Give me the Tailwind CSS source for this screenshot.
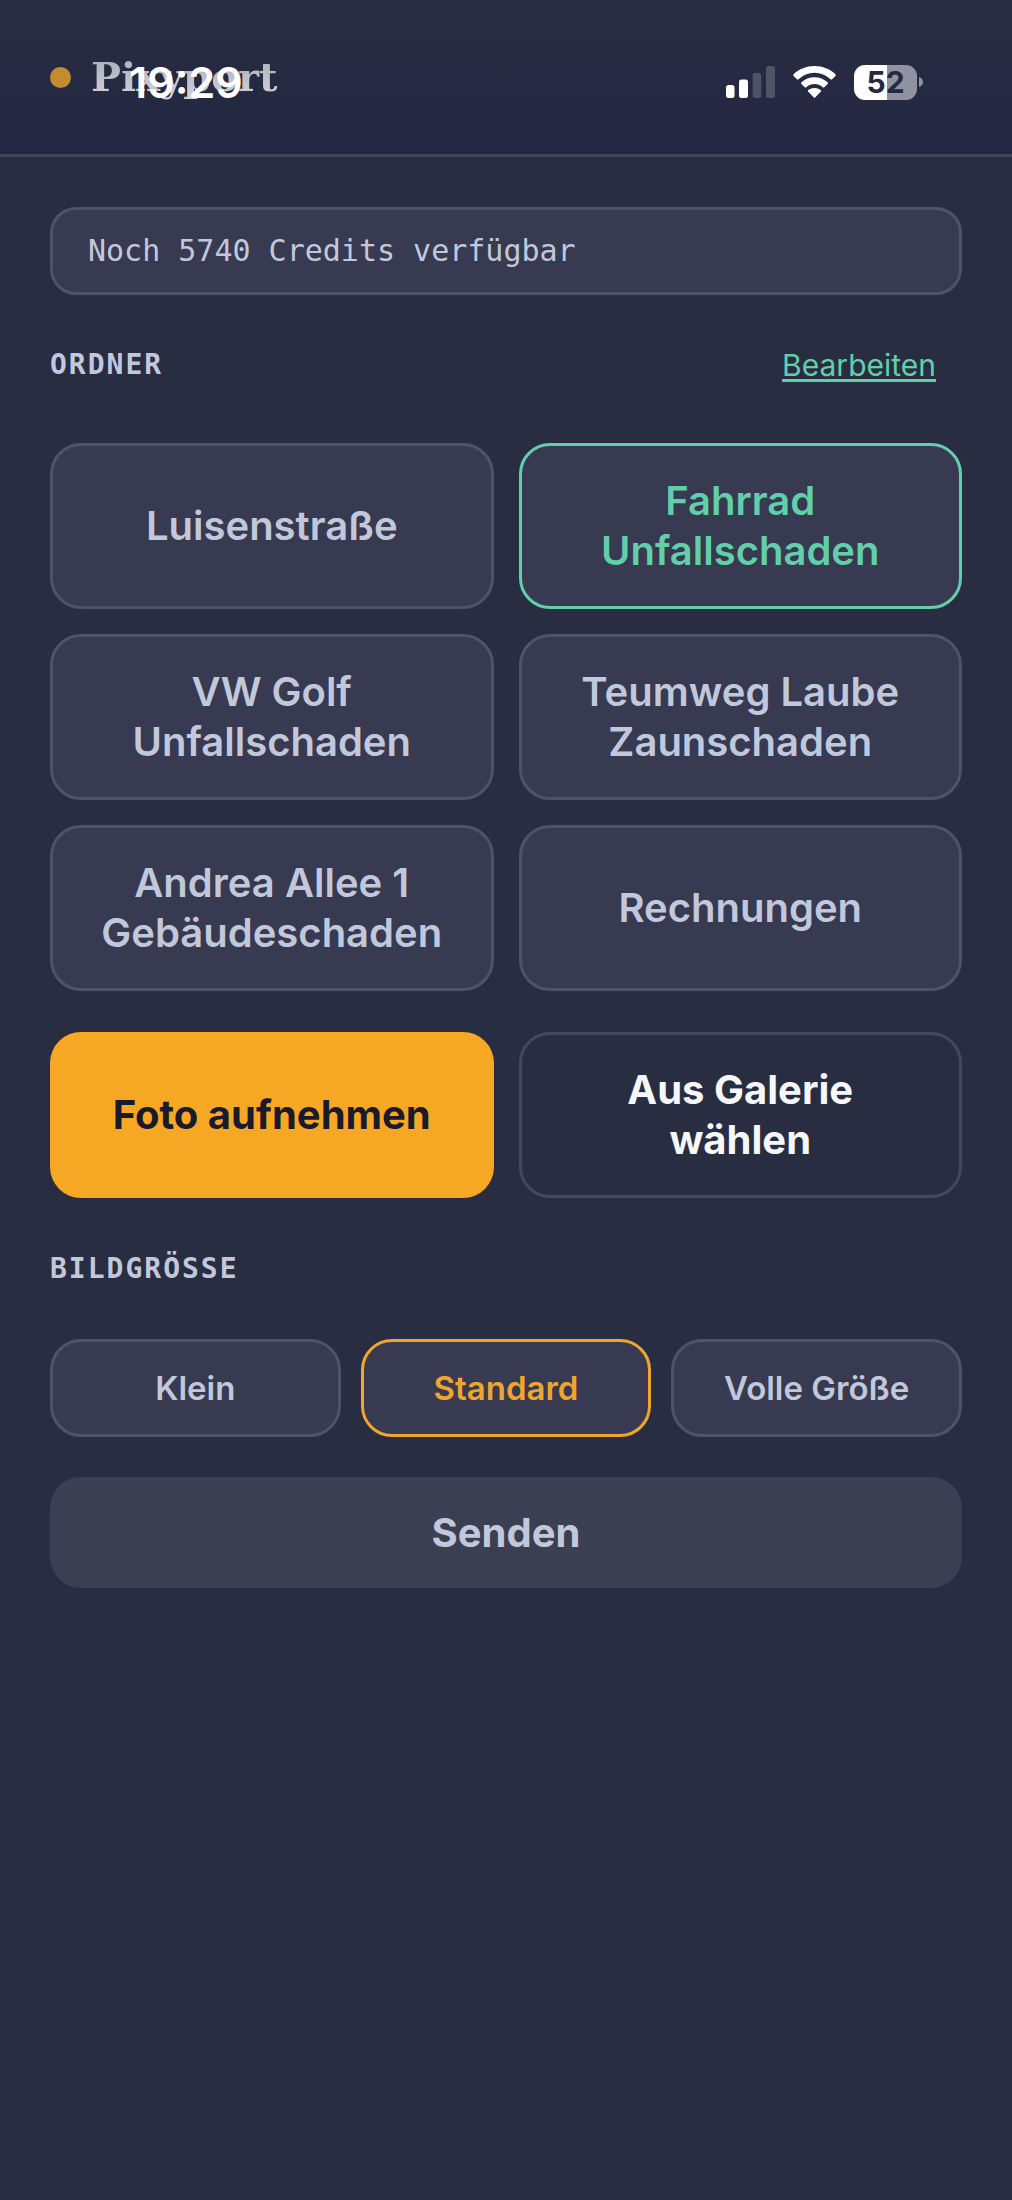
<!DOCTYPE html>
<html lang="de">

<head>
  <meta charset="UTF-8" />
  <meta name="viewport" content="width=device-width, initial-scale=1.0" />
  <title>Pixyport</title>
  <script src="https://cdn.jsdelivr.net/npm/@tailwindcss/browser@4"></script>
</head>

<body class="min-h-screen bg-[#292d42] font-['Inter',sans-serif] text-[#c2c8dc]">

  <!-- App header, runs underneath the status bar -->
  <header class="relative border-b-3 border-[#43465b] bg-gradient-to-b from-[#292d42] to-[#232641]">
    <div class="flex h-[154px] items-center gap-5 px-[50px]">
      <span class="size-[21px] rounded-full bg-[#c38d2e]"></span>
      <h1 class="bg-gradient-to-b from-[#a6a8b2] to-[#d6d7df] bg-clip-text font-['DejaVu_Serif',serif] text-[40px] leading-[56px] font-bold text-transparent">Pixyport</h1>
    </div>

    <!-- Status bar: time on the left, signal, wifi and battery on the right -->
    <div class="absolute inset-x-0 top-0 flex h-[164px] items-center justify-between pr-[89px] pl-[129px] text-white">
      <time class="text-[43px] leading-[50px] font-semibold">19:29</time>
      <div class="flex items-center">
        <svg class="mr-[18px] h-[32px] w-[49px]" viewBox="0 0 49 32" fill="currentColor" aria-hidden="true">
          <rect x="0" y="19" width="8.500" height="13" rx="2.500" />
          <rect x="13" y="13.500" width="9" height="18.500" rx="2.500" />
          <rect x="26.700" y="7" width="8.500" height="25" rx="2.500" fill="#505268" />
          <rect x="40" y="0" width="9" height="32" rx="2.500" fill="#505268" />
        </svg>
        <svg class="mr-[18px] h-[32px] w-[43px]" viewBox="0 0 43 32" fill="currentColor" aria-hidden="true">
          <path d="M21.500 0C13.500 0 6 3 .6 8.200a1.200 1.200 0 0 0 0 1.700l3.300 3.400a1.200 1.200 0 0 0 1.600 0A23 23 0 0 1 21.500 6.800a23 23 0 0 1 16 6.500 1.200 1.200 0 0 0 1.600 0l3.300-3.400a1.200 1.200 0 0 0 0-1.700C37 3 29.500 0 21.500 0Z" />
          <path d="M21.500 11.200c-5 0-9.600 1.900-13.100 5a1.200 1.200 0 0 0 0 1.700l3.300 3.300a1.200 1.200 0 0 0 1.600 0 12.200 12.200 0 0 1 16.400 0 1.200 1.200 0 0 0 1.600 0l3.300-3.300a1.200 1.200 0 0 0 0-1.700c-3.500-3.100-8.100-5-13.100-5Z" />
          <path d="M21.500 22c-2.300 0-4.500.8-6.200 2.100a1.200 1.200 0 0 0 0 1.700l5.300 5.500a1.200 1.200 0 0 0 1.800 0l5.300-5.500a1.200 1.200 0 0 0 0-1.700A10 10 0 0 0 21.500 22Z" />
        </svg>
        <div class="mr-[2px] flex h-[35px] w-[63px] items-center justify-center rounded-[11px] bg-linear-to-r from-white from-52% to-[#9192a1] to-52% text-[30px] leading-[35px] font-bold text-[#262943]">52</div>
        <svg class="h-[10px] w-[4px]" viewBox="0 0 4 10" fill="#9192a1" aria-hidden="true">
          <path d="M0 0c2.500.8 4 2.700 4 5s-1.500 4.200-4 5Z" />
        </svg>
      </div>
    </div>
  </header>

  <main class="flex flex-col px-[50px] py-[50px]">
    <!-- Credits -->
    <p class="rounded-[26px] border-3 border-[#505368] bg-[#373a50] px-[35px] py-[19px] font-['DejaVu_Sans_Mono',monospace] text-[30px] leading-[44px]">Noch 5740 Credits verfügbar</p>

    <!-- Folders -->
    <div class="mt-[50px] flex items-center justify-between">
      <h2 class="font-['DejaVu_Sans_Mono',monospace] text-[28px] leading-10 font-bold tracking-[2px]">ORDNER</h2>
      <button type="button" class="px-[26px] text-[30px] leading-10 text-[#62cfaa] underline decoration-3 underline-offset-3">Bearbeiten</button>
    </div>
    <div class="mt-[58px] grid grid-cols-2 gap-[25px] text-[40px] leading-[50px] font-semibold">
      <button type="button" class="min-h-[166px] rounded-[31px] border-3 border-[#505368] bg-[#373a50] px-8">Luisenstraße</button>
      <button type="button" class="min-h-[166px] rounded-[31px] border-3 border-[#62cfaa] bg-[#373a50] px-8 text-[#62cfaa]">Fahrrad Unfallschaden</button>
      <button type="button" class="min-h-[166px] rounded-[31px] border-3 border-[#505368] bg-[#373a50] px-8">VW Golf Unfallschaden</button>
      <button type="button" class="min-h-[166px] rounded-[31px] border-3 border-[#505368] bg-[#373a50] px-8">Teumweg Laube Zaunschaden</button>
      <button type="button" class="min-h-[166px] rounded-[31px] border-3 border-[#505368] bg-[#373a50] px-8">Andrea Allee 1 Gebäudeschaden</button>
      <button type="button" class="min-h-[166px] rounded-[31px] border-3 border-[#505368] bg-[#373a50] px-8">Rechnungen</button>
    </div>

    <!-- Photo source -->
    <div class="mt-[41px] grid grid-cols-2 gap-[25px] text-[40px] leading-[50px] font-bold">
      <button type="button" class="min-h-[166px] rounded-[31px] bg-[#f6a724] px-8 text-[#1a1a2a]">Foto aufnehmen</button>
      <button type="button" class="min-h-[166px] rounded-[31px] border-3 border-[#45485d] px-20 text-[#f5f7fa]">Aus Galerie wählen</button>
    </div>

    <!-- Image size -->
    <fieldset class="mt-[51px]">
      <legend class="font-['DejaVu_Sans_Mono',monospace] text-[28px] leading-10 font-bold tracking-[2px]">BILDGRÖSSE</legend>
      <div class="mt-[50px] grid grid-cols-3 gap-5 text-[33px] leading-10 font-semibold">
        <label class="relative flex min-h-[98px] items-center justify-center rounded-[31px] border-3 border-[#505368] bg-[#373a50] has-checked:border-[#f0a62e] has-checked:text-[#f0a62e]">
          <input type="radio" name="size" value="small" class="sr-only" />Klein
        </label>
        <label class="relative flex min-h-[98px] items-center justify-center rounded-[31px] border-3 border-[#505368] bg-[#373a50] has-checked:border-[#f0a62e] has-checked:text-[#f0a62e]">
          <input type="radio" name="size" value="standard" class="sr-only" checked />Standard
        </label>
        <label class="relative flex min-h-[98px] items-center justify-center rounded-[31px] border-3 border-[#505368] bg-[#373a50] has-checked:border-[#f0a62e] has-checked:text-[#f0a62e]">
          <input type="radio" name="size" value="full" class="sr-only" />Volle Größe
        </label>
      </div>
    </fieldset>

    <button type="button" class="mt-10 min-h-[111px] rounded-[31px] bg-[#3b3f52] text-[40px] leading-[50px] font-bold">Senden</button>
  </main>
</body>

</html>
